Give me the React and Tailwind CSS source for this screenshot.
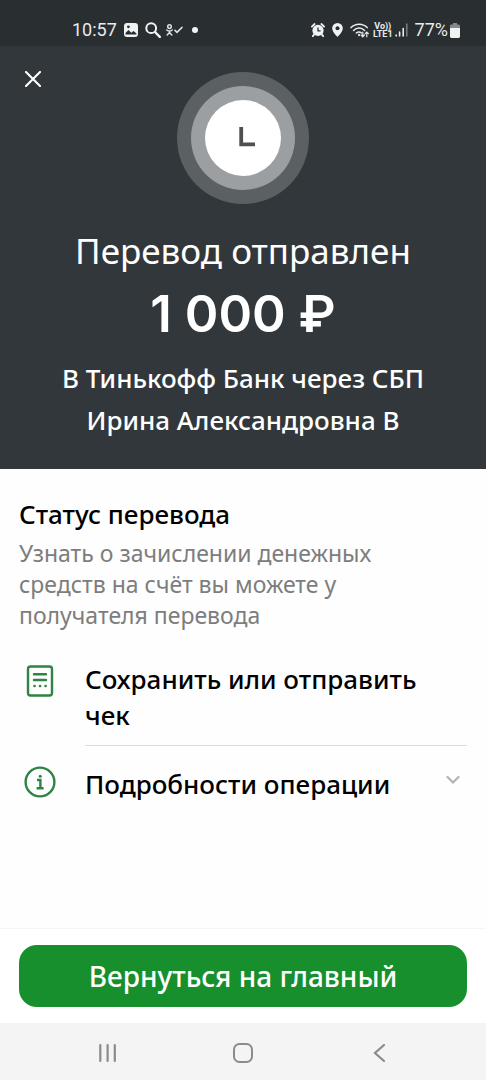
const FONT = "font-['Noto_Sans','Open_Sans',sans-serif]";

function StatusBar() {
  return (
    <div className="flex h-[46px] items-center justify-between bg-[#292e31] pt-[14px] pr-[26px] pl-[72px] font-[Roboto,sans-serif] text-lg text-[#e8eaeb]">
      <div className="flex items-center gap-[7px]">
        <span>10:57</span>
        <svg className="h-[14px] w-[14px]" viewBox="0 0 14 14" aria-hidden="true">
          <rect width="14" height="14" rx="3" fill="#f1f3f3" />
          <path d="M1.5 11.5V10l3-3 2.8 2.8L9.5 8l3 2.5v1H1.5z" fill="#292e31" />
          <circle cx="4.4" cy="3.8" r="1.4" fill="#292e31" />
        </svg>
        <svg className="h-4 w-4" viewBox="0 0 16 16" fill="none" stroke="#f1f3f3" strokeLinecap="round" aria-hidden="true">
          <circle cx="6.2" cy="6.2" r="4.9" strokeWidth="2" />
          <path d="M10 10l4.8 4.8" strokeWidth="2.4" />
        </svg>
        <svg className="-ml-[2px] h-3 w-[17px]" viewBox="0 0 17 12" fill="none" stroke="#dfe2e3" strokeWidth="1.5" strokeLinecap="round" aria-hidden="true">
          <circle cx="3.5" cy="2.6" r="1.8" />
          <path d="M.8 6c1.6 1.3 3.8 1.3 5.4 0M3.5 7v1.4L1.2 11M3.5 8.4 5.8 11M9 6.4l2 2L16 3.4" />
        </svg>
        <span className="ml-[2px] h-[6px] w-[6px] rounded-full bg-[#f1f3f3]" />
      </div>
      <div className="flex items-center">
        <svg className="h-[14px] w-[14px]" viewBox="0 0 14 14" aria-hidden="true">
          <circle cx="7" cy="7.4" r="5.6" fill="#f1f3f3" />
          <path d="M.9 3.6 3.6 1M13.1 3.6 10.4 1M3 11.6l-1.2 1.6M11 11.6l1.2 1.6" stroke="#f1f3f3" strokeWidth="1.8" strokeLinecap="round" />
          <path d="M7 4.4v3.4h2.6" fill="none" stroke="#292e31" strokeWidth="1.3" />
        </svg>
        <svg className="ml-[7px] h-[14px] w-[11px]" viewBox="0 0 11 14" aria-hidden="true">
          <path d="M5.5 0A5.3 5.3 0 0 0 .2 5.3C.2 9 5.5 14 5.5 14s5.3-5 5.3-8.7A5.3 5.3 0 0 0 5.5 0z" fill="#f1f3f3" />
          <circle cx="5.5" cy="5.2" r="2" fill="#292e31" />
        </svg>
        <svg className="ml-[7px] h-[15px] w-[19px]" viewBox="0 0 19 15" fill="none" stroke="#e8eaeb" strokeWidth="1.5" strokeLinecap="round" aria-hidden="true">
          <path d="M1 4.6c4.4-4.6 12-4.6 16.2 0M3.6 7.4c3-3.2 8-3.2 11 0M6.4 10c1.4-1.5 3.6-1.5 5 0" />
          <path d="M9 11.8v.4" strokeWidth="2" />
          <path d="M12.8 9v4.6M11.2 12l1.6 1.8 1.6-1.8M16.8 13.8V9M15.2 10.6 16.8 9l1.6 1.6" strokeWidth="1.2" />
        </svg>
        <span className="ml-1 flex flex-col items-center text-[9px] leading-[8px] font-bold">
          <span>Vo))</span>
          <span>LTE1</span>
        </span>
        <svg className="ml-[2px] h-[14px] w-[13px]" viewBox="0 0 13 14" strokeWidth="1.6" strokeLinecap="round" aria-hidden="true">
          <path d="M1.2 12v1M4.6 9v4M8.2 5.5V13" stroke="#e8eaeb" />
          <path d="M11.8 1v12" stroke="#757a7d" />
        </svg>
        <span className="ml-[7px]">77%</span>
        <svg className="ml-[2px] h-[15px] w-[10px]" viewBox="0 0 10 15" aria-hidden="true">
          <path d="M3 0h4v1.4h1.6A1.4 1.4 0 0 1 10 2.8V5H0V2.8a1.4 1.4 0 0 1 1.4-1.4H3z" fill="#858a8c" />
          <path d="M0 5h10v8.6a1.4 1.4 0 0 1-1.4 1.4H1.4A1.4 1.4 0 0 1 0 13.6z" fill="#f1f3f3" />
        </svg>
      </div>
    </div>
  );
}

function TransferHeader() {
  return (
    <header className="bg-[#32373b] pb-7 text-center text-white">
      <div className="grid grid-cols-[1fr_auto_1fr] items-start px-[18px] pt-[18px]">
        <button type="button" aria-label="Закрыть" className="grid h-[30px] w-[30px] place-items-center">
          <svg className="h-4 w-4" viewBox="0 0 16 16" fill="none" stroke="#fff" strokeWidth="2.1" strokeLinecap="round">
            <path d="M1 1l14 14M15 1 1 15" />
          </svg>
        </button>
        <svg className="mt-2 h-[132px] w-[132px]" viewBox="0 0 132 132" role="img" aria-label="Выполняется">
          <circle cx="66" cy="66" r="66" fill="#5b6063" />
          <circle cx="66" cy="66" r="52" fill="#9b9fa2" />
          <circle cx="66" cy="66" r="38" fill="#fff" />
          <path d="M64.2 55v17.4H78" fill="none" stroke="#505050" strokeWidth="3.8" />
        </svg>
      </div>
      <h1 className="mt-6 text-[35px] leading-[46px] font-normal">Перевод отправлен</h1>
      <p className="mt-2 font-[Inter,sans-serif] text-[51px] leading-[64px] font-semibold">1 000 ₽</p>
      <p className="mt-[11px] text-[26px] leading-[42px] font-medium">
        В Тинькофф Банк через СБП
        <br />
        Ирина Александровна В
      </p>
    </header>
  );
}

function ReceiptIcon() {
  return (
    <svg className="h-8 w-8" viewBox="0 0 32 32" fill="none" stroke="#2f8443" strokeWidth="2.4" strokeLinecap="round" aria-hidden="true">
      <rect x="4" y="1.5" width="24" height="29" rx="2.5" />
      <path d="M10 9.2h12M10 15h12" />
      <path d="M10.5 21h.1M16 21h.1M21.5 21h.1" strokeWidth="2.6" />
    </svg>
  );
}

function InfoIcon() {
  return (
    <svg className="h-8 w-8" viewBox="0 0 32 32" fill="none" stroke="#2f8443" strokeWidth="2.4" aria-hidden="true">
      <circle cx="16" cy="16" r="14.4" />
      <path d="M13 14h3.4v8M12.6 22.2h7" />
      <circle cx="16.2" cy="10.2" r="1.5" fill="#2f8443" stroke="none" />
    </svg>
  );
}

function NavBar() {
  return (
    <nav className="flex h-[57px] items-center justify-around bg-[#f4f4f4] px-10 pt-[2px] text-[#8b8b8b]">
      <button type="button" aria-label="Недавние" className="grid h-10 w-12 place-items-center">
        <svg className="h-5 w-5" viewBox="0 0 20 20" fill="none" stroke="currentColor" strokeWidth="2.2" strokeLinecap="round">
          <path d="M2.3 2v16M9.6 2v16M16.8 2v16" />
        </svg>
      </button>
      <button type="button" aria-label="Домой" className="grid h-10 w-12 place-items-center">
        <svg className="h-5 w-5" viewBox="0 0 20 20" fill="none" stroke="currentColor" strokeWidth="2">
          <rect x="1" y="1" width="18" height="18" rx="5.5" />
        </svg>
      </button>
      <button type="button" aria-label="Назад" className="grid h-10 w-12 place-items-center">
        <svg className="h-5 w-5" viewBox="0 0 20 20" fill="none" stroke="currentColor" strokeWidth="2.2" strokeLinecap="round">
          <path d="M16 2 7 10l9 8" />
        </svg>
      </button>
    </nav>
  );
}

export default function App() {
  return (
    <div className={`flex min-h-screen flex-col bg-[#fefefe] text-black ${FONT}`}>
      <StatusBar />
      <TransferHeader />

      <main className="flex-1 px-[19px] pt-7">
        <h2 className="text-[26px] leading-[34px] font-medium">Статус перевода</h2>
        <p className="mt-[7px] max-w-[380px] text-[23px] leading-[31px] text-[#7d7d7d]">
          Узнать о зачислении денежных средств на счёт вы можете у получателя перевода
        </p>

        <ul className="mt-7">
          <li>
            <button type="button" className="flex w-full items-start pl-[5px] text-left">
              <span className="mt-[6px]">
                <ReceiptIcon />
              </span>
              <span className="ml-[29px] flex-1 border-b border-[#dcdcdc] pt-[2px] pr-10 pb-3 text-[26px] leading-[36px] font-medium">
                Сохранить или отправить чек
              </span>
            </button>
          </li>
          <li>
            <button type="button" aria-expanded="false" className="flex w-full items-start pt-5 pr-[6px] pl-[5px] text-left">
              <InfoIcon />
              <span className="ml-[29px] flex-1 text-[26px] leading-[36px] font-medium">Подробности операции</span>
              <svg className="mt-[6px] h-4 w-4" viewBox="0 0 16 16" fill="none" stroke="#b2b2b2" strokeWidth="2.2" strokeLinecap="round" aria-hidden="true">
                <path d="M2.5 5 8 10.5 13.5 5" />
              </svg>
            </button>
          </li>
        </ul>
      </main>

      <div className="border-t border-[#f5f5f5] bg-white px-[19px] py-4">
        <button type="button" className="h-[62px] w-full rounded-[18px] bg-[#188f2d] text-[28px] font-medium text-white">
          Вернуться на главный
        </button>
      </div>
      <NavBar />
    </div>
  );
}
